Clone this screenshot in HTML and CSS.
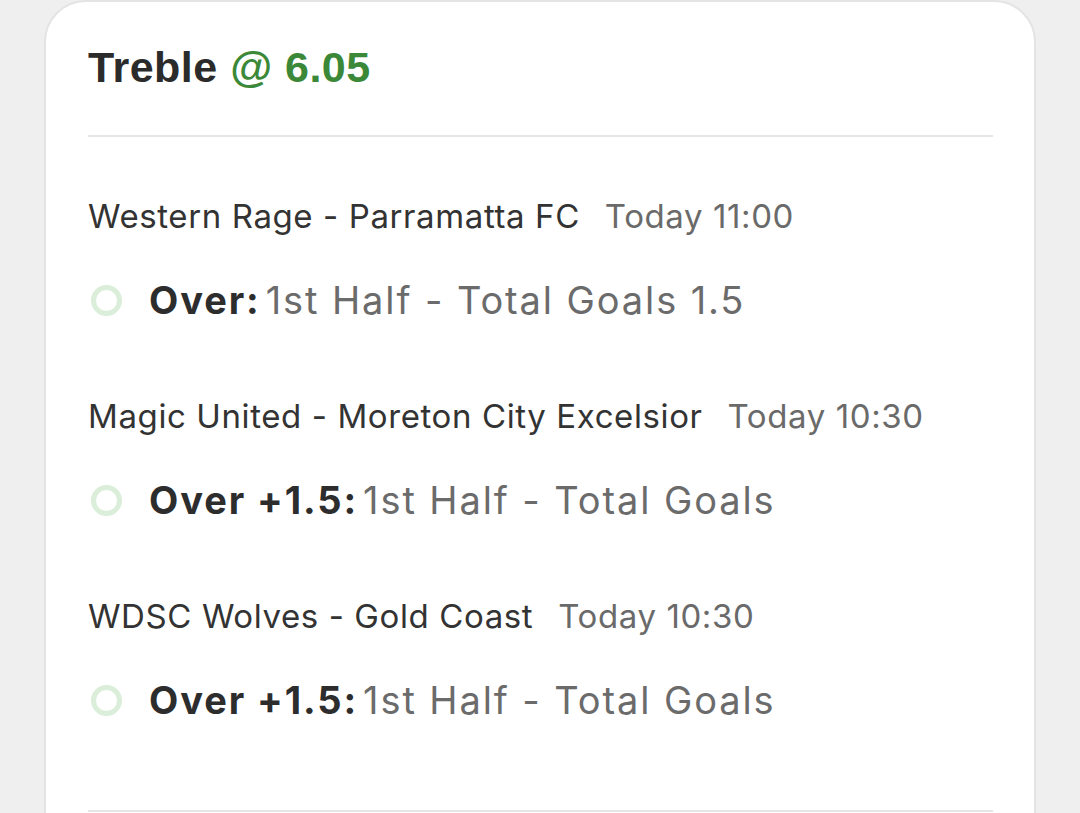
FILE: index.html
```html
<!DOCTYPE html>
<html>
<head>
<meta charset="utf-8">
<link rel="stylesheet" href="styles.css">
</head>
<body>
<div class="card">
  <h1 class="title">Treble <span class="odds">@ 6.05</span></h1>
  <div class="divider"></div>
  <div class="legs">
    <div class="leg">
      <div class="match"><span class="teams">Western Rage - Parramatta FC</span><span class="time">Today 11:00</span></div>
      <div class="sel"><span class="dot"></span><span class="pick">Over:</span><span class="market">1st Half - Total Goals 1.5</span></div>
    </div>
    <div class="leg">
      <div class="match"><span class="teams">Magic United - Moreton City Excelsior</span><span class="time">Today 10:30</span></div>
      <div class="sel"><span class="dot"></span><span class="pick">Over +1.5:</span><span class="market">1st Half - Total Goals</span></div>
    </div>
    <div class="leg">
      <div class="match"><span class="teams">WDSC Wolves - Gold Coast</span><span class="time">Today 10:30</span></div>
      <div class="sel"><span class="dot"></span><span class="pick">Over +1.5:</span><span class="market">1st Half - Total Goals</span></div>
    </div>
  </div>
  <div class="divider bottom"></div>
</div>
</body>
</html>
```
FILE: styles.css
```css
html, body {
  margin: 0;
  padding: 0;
  background: #efefef;
  height: 813px;
  overflow: hidden;
}
.card {
  margin-left: 44px;
  width: 992px;
  height: 900px;
  background: #fff;
  border: 2px solid #e4e4e4;
  border-radius: 42px;
  padding: 40px 41px 0 42px;
  box-sizing: border-box;
  font-family: Inter, "Noto Sans", sans-serif;
}
.title {
  margin: 0;
  font-family: "Liberation Sans", Arial, sans-serif;
  font-weight: 700;
  font-size: 43px;
  line-height: 50px;
  letter-spacing: 0.5px;
  color: #2b2b2b;
}
.odds { color: #3b8838; }
.divider {
  height: 2px;
  background: #e6e6e6;
  margin-top: 43px;
}
.legs {
  display: flex;
  flex-direction: column;
  gap: 74px;
  padding-top: 59px;
}
.match {
  display: flex;
  gap: 25px;
  font-size: 33px;
  line-height: 40px;
  letter-spacing: 0.6px;
  color: #333;
}
.time { color: #6a6a6a; }
.sel {
  display: flex;
  align-items: center;
  margin-top: 42px;
  font-size: 38px;
  line-height: 44px;
  letter-spacing: 1.9px;
}
.dot {
  width: 21px;
  height: 21px;
  border: 5px solid #daeeda;
  border-radius: 50%;
  margin-left: 3px;
  margin-right: 27px;
  flex: none;
}
.pick {
  font-weight: 700;
  color: #2d2d2d;
  margin-right: 5px;
}
.market { color: #6b6b6b; }
.divider.bottom { margin-top: 88px; }
```
